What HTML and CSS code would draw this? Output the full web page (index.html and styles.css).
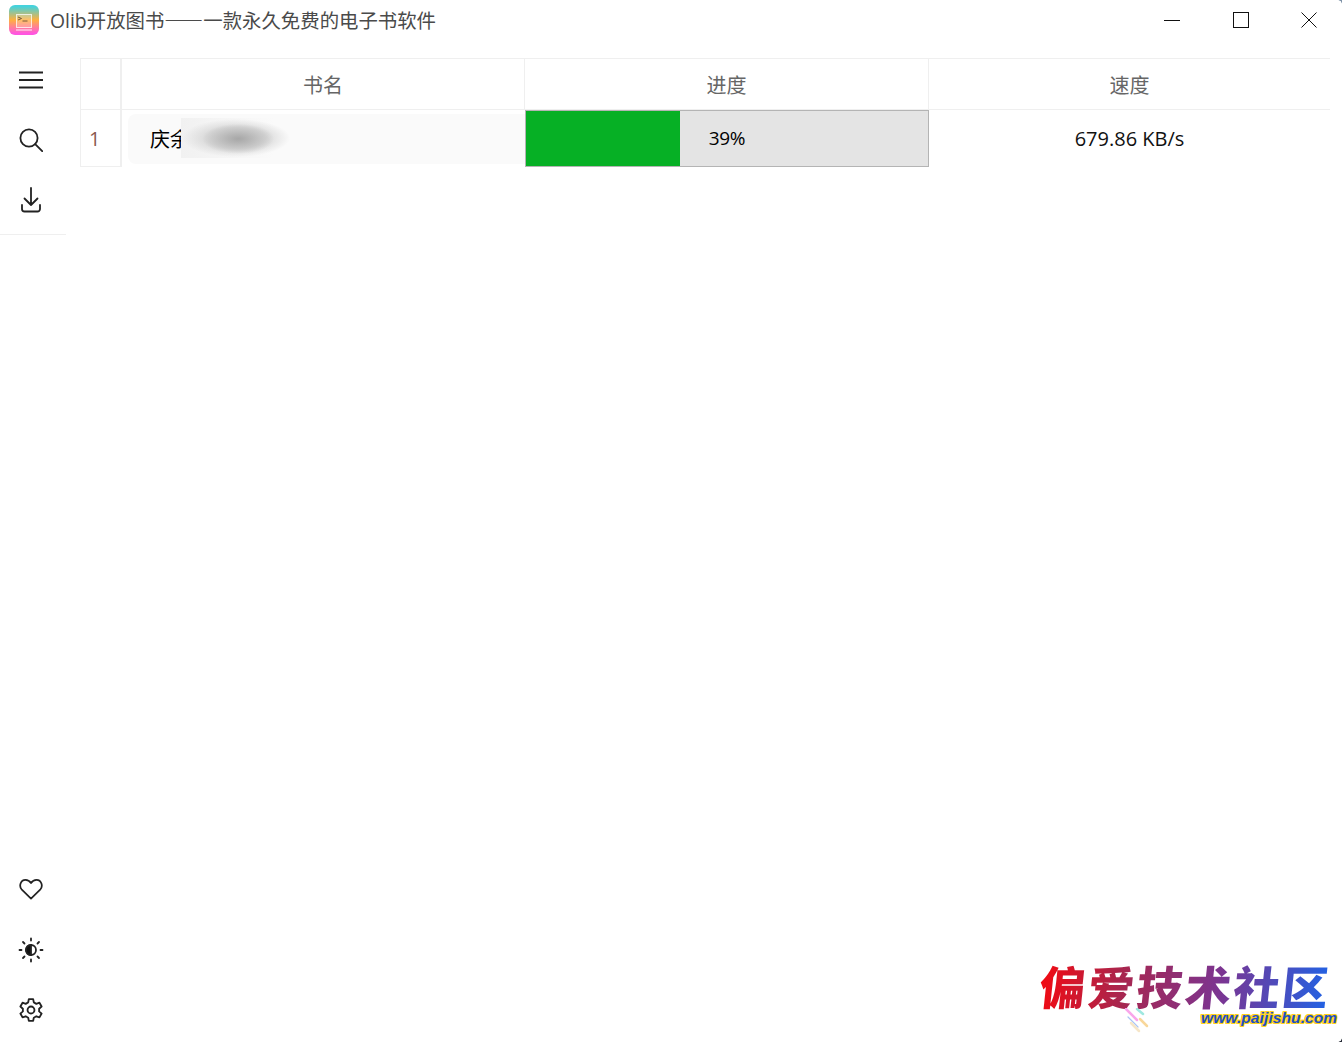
FILE: index.html
```html
<!DOCTYPE html>
<html lang="zh-CN">
<head>
<meta charset="utf-8">
<title>Olib开放图书</title>
<link rel="stylesheet" href="styles.css">
</head>
<body>
<div class="window">
  <header class="titlebar">
    <div class="title-left">
      <svg class="logo" width="30" height="30" viewBox="0 0 30 30">
        <defs>
          <linearGradient id="lg" x1="0" y1="0" x2="0" y2="1">
            <stop offset="0.05" stop-color="#45d2dc"/>
            <stop offset="0.5" stop-color="#ffb03f"/>
            <stop offset="0.95" stop-color="#ff55e0"/>
          </linearGradient>
        </defs>
        <rect width="30" height="30" rx="6" fill="url(#lg)"/>
        <rect x="7.500" y="9.500" width="15" height="13" fill="#fff" fill-opacity=".2" stroke="#fff" stroke-opacity=".75"/>
        <path d="M9 12l3.500 1.500L9 15M13.500 16h5" fill="none" stroke="#7a5a3a" stroke-width="1"/>
        <path d="M7 25h16" stroke="#fff" stroke-opacity=".6" stroke-width="1.500"/>
      </svg>
      <span class="title-text">Olib开放图书<span class="dash">——</span>一款永久免费的电子书软件</span>
    </div>
    <div class="win-controls">
      <svg width="16" height="16" viewBox="0 0 16 16"><path d="M0 8.500h16" stroke="#111" fill="none"/></svg>
      <svg class="win-max" width="16" height="16" viewBox="0 0 16 16"><rect x=".5" y=".5" width="15" height="15" stroke="#111" fill="none"/></svg>
      <svg width="16" height="16" viewBox="0 0 16 16"><path d="M.5.5l15 15M15.500.5l-15 15" stroke="#111" fill="none"/></svg>
    </div>
  </header>
  <div class="body">
    <nav class="sidebar">
      <div class="nav-top">
        <div class="nav-item">
          <svg width="24" height="24" viewBox="0 0 24 24" fill="none" stroke="#222" stroke-width="2"><path d="M0 4.500h24M0 12h24M0 19.500h24"/></svg>
        </div>
        <div class="nav-item">
          <svg width="24" height="24" viewBox="0 0 24 24" fill="none" stroke="#222" stroke-width="1.800"><circle cx="10" cy="10" r="8.600"/><path d="M16.200 16.200l7 7" stroke-linecap="round"/></svg>
        </div>
        <div class="nav-item">
          <svg width="24" height="26" viewBox="0 0 24 26" fill="none" stroke="#222" stroke-width="1.800" stroke-linecap="round" stroke-linejoin="round"><path d="M12 1v17M5.500 11.500L12 18l6.500-6.500M3 18v4a2.500 2.500 0 0 0 2.500 2.500h13A2.500 2.500 0 0 0 21 22v-4"/></svg>
        </div>
      </div>
      <div class="nav-bottom">
        <div class="nav-item">
          <svg class="heart" width="24" height="22" viewBox="0 0 26 24" fill="none" stroke="#222" stroke-width="1.900" stroke-linejoin="round"><path d="M13 22.500L3 12.800C-.5 9 1.500 2 7 2c2.800 0 4.700 1.500 6 3.500C14.300 3.500 16.200 2 19 2c5.500 0 7.500 7 4 10.800z"/></svg>
        </div>
        <div class="nav-item">
          <svg width="26" height="26" viewBox="0 0 26 26" fill="none" stroke="#222" stroke-width="1.800" stroke-linecap="round"><circle cx="13" cy="13" r="5"/><path d="M13 8a5 5 0 0 0 0 10z" fill="#111"/><path d="M13 1.500v2M13 22.500v2M1.500 13h2M22.500 13h2M5 5l1.500 1.500M19.500 19.500L21 21M21 5l-1.500 1.500M6.500 19.500L5 21"/></svg>
        </div>
        <div class="nav-item">
          <svg width="26" height="26" viewBox="0 0 24 24" fill="none" stroke="#222" stroke-width="1.700" stroke-linejoin="round"><circle cx="12" cy="12" r="3.200"/><path d="M10 2h4l.6 3 2.300 1.300 2.900-1 2 3.500-2.300 2 0 2.500 2.300 2-2 3.500-2.900-1-2.300 1.300-.6 3h-4l-.6-3-2.300-1.300-2.900 1-2-3.500 2.300-2 0-2.500-2.300-2 2-3.500 2.900 1L9.400 5z"/></svg>
        </div>
      </div>
    </nav>
    <main class="content">
      <div class="table">
        <div class="corner"></div>
        <div class="head">书名</div>
        <div class="head">进度</div>
        <div class="head last">速度</div>
        <div class="row-head">1</div>
        <div class="name-cell">
          <div class="name-pill">庆余<span class="blur"></span></div>
        </div>
        <div class="progress">
          <div class="progress-fill" style="width:154px"></div>
          <span class="progress-text">39%</span>
        </div>
        <div class="speed">679.86 KB/s</div>
      </div>
    </main>
  </div>
  <div class="watermark">
    <div class="wm-title">偏爱技术社区</div>
    <div class="wm-url">www.paijishu.com</div>
    <svg class="wm-streaks" width="30" height="26" viewBox="0 0 30 26" fill="none" stroke-linecap="round" stroke-width="2.500">
      <path d="M2 1l11 11" stroke="#f9a6ea"/>
      <path d="M13 1l6 5" stroke="#9fe8e0"/>
      <path d="M4 9l10 10" stroke="#a9c4f5" stroke-width="1.200"/>
      <path d="M16 11l7 7" stroke="#f8d79a"/>
      <path d="M7 15l8 8" stroke="#f6e6c8"/>
    </svg>
  </div>
  <div class="corner-tr"></div>
  <div class="corner-br"></div>
</div>
</body>
</html>
```
FILE: styles.css
```css
html, body {
  margin: 0;
  padding: 0;
  background: #fff;
}
.window {
  position: relative;
  width: 1342px;
  height: 1042px;
  overflow: hidden;
  display: flex;
  flex-direction: column;
  font-family: "Open Sans", "Noto Sans CJK SC", sans-serif;
  color: #111;
}
.titlebar {
  height: 50px;
  flex: none;
  display: flex;
  justify-content: space-between;
  align-items: flex-start;
}
.title-left {
  display: flex;
  align-items: center;
  gap: 11px;
  padding: 5px 0 0 9px;
}
.logo { display: block; position: relative; top: -1px; }
.title-text {
  font-size: 19.400px;
  line-height: 30px;
  color: #4a4a4a;
}
.dash {
  font-family: "Noto Sans CJK SC", sans-serif;
  letter-spacing: .2px;
  color: #222;
}
.win-controls {
  display: flex;
  gap: 52px;
  padding: 12px 25px 0 0;
}
.win-controls svg { display: block; }
.win-max { margin-left: 1px; }
.body {
  flex: 1;
  display: flex;
  min-height: 0;
}
.sidebar {
  flex: none;
  display: flex;
  flex-direction: column;
  justify-content: space-between;
  padding-right: 4px;
  box-sizing: content-box;
  width: 62px;
  padding-bottom: 2px;
}
.nav-top {
  border-bottom: 1px solid #efefef;
  margin-right: -4px;
  padding-bottom: 4px;
  padding-right: 4px;
}
.nav-item {
  height: 60px;
  display: flex;
  align-items: center;
  justify-content: center;
}
.nav-item svg { display: block; }
.heart { position: relative; top: -1px; }
.content {
  flex: 1;
  padding: 8px 12px 0 14px;
  min-width: 0;
}
.table {
  display: grid;
  grid-template-columns: 42px 403px 404px 401px;
  grid-template-rows: 51px 57px;
  border-top: 1px solid #efefef;
}
.corner,
.head {
  display: flex;
  align-items: center;
  justify-content: center;
  font-size: 20px;
  color: #666;
  background: #fff;
  border-bottom: 1px solid #efefef;
  border-right: 1px solid #efefef;
  box-sizing: border-box;
}
.corner {
  border-left: 1px solid #efefef;
  border-right: 2px solid #efefef;
}
.head.last { border-right: 0; }
.row-head {
  display: flex;
  align-items: center;
  font-size: 20px;
  color: #8a5a50;
  padding-left: 8px;
  border-left: 1px solid #efefef;
  border-right: 2px solid #efefef;
  border-bottom: 1px solid #efefef;
  box-sizing: border-box;
}
.name-cell {
  padding: 4px 0 3px 6px;
  box-sizing: border-box;
  min-width: 0;
}
.name-pill {
  position: relative;
  height: 100%;
  box-sizing: border-box;
  background: #fafafa;
  border-radius: 8px 0 0 8px;
  padding: 0 0 2px 22px;
  display: flex;
  align-items: center;
  font-size: 20px;
  color: #000;
  overflow: hidden;
}
.blur {
  position: absolute;
  left: 53px;
  top: 4px;
  width: 110px;
  height: 40px;
  background:
    radial-gradient(ellipse 36px 15px at 52% 52%, rgba(165,165,165,.95) 0, rgba(185,185,185,.6) 60%, rgba(250,250,250,0) 100%),
    radial-gradient(ellipse 54px 19px at 50% 50%, #cfcfcf 0, #dadada 55%, rgba(250,250,250,0) 100%),
    linear-gradient(90deg, #f1f1f1, #fafafa 85%);
}
.progress {
  position: relative;
  box-sizing: border-box;
  border: 1px solid #b4b4b4;
  background: #e4e4e4;
  padding-bottom: 2px;
  display: flex;
  align-items: center;
  justify-content: center;
}
.progress-fill {
  position: absolute;
  left: 0;
  top: 0;
  bottom: 0;
  background: #06b025;
}
.progress-text {
  position: relative;
  font-size: 19px;
  letter-spacing: -.3px;
  color: #000;
}
.speed {
  display: flex;
  align-items: center;
  justify-content: center;
  font-size: 20px;
  color: #111;
}
.watermark {
  position: absolute;
  left: 1040px;
  top: 955px;
  width: 300px;
  height: 85px;
}
.wm-title {
  font-family: "Noto Sans CJK SC", sans-serif;
  font-weight: 900;
  font-size: 46px;
  line-height: 60px;
  letter-spacing: 2.500px;
  white-space: nowrap;
  width: 292px;
  transform: skewX(-6deg);
  background: linear-gradient(90deg, #f20a12 0%, #a8264f 28%, #7b3592 62%, #1f63e6 100%);
  -webkit-background-clip: text;
  background-clip: text;
  color: transparent;
}
.wm-url {
  position: absolute;
  left: 161px;
  top: 54px;
  font-family: "Liberation Sans", sans-serif;
  font-weight: 700;
  font-style: italic;
  font-size: 15.500px;
  line-height: 18px;
  letter-spacing: .1px;
  color: #1d4fc4;
  text-shadow: 1px 0 0 #ffd21a, -1px 0 0 #ffd21a, 0 1px 0 #ffd21a, 0 -1px 0 #ffd21a, 1px 1px 0 #ffd21a, -1px -1px 0 #ffd21a, 1px -1px 0 #ffd21a, -1px 1px 0 #ffd21a;
  white-space: nowrap;
}
.wm-streaks {
  position: absolute;
  left: 84px;
  top: 53px;
}
.corner-tr,
.corner-br {
  position: absolute;
  right: 0;
  width: 4px;
  height: 4px;
}
.corner-tr {
  top: 0;
  background: radial-gradient(circle at 0 100%, transparent 3.500px, #7f93a8 4px);
}
.corner-br {
  bottom: 0;
  background: radial-gradient(circle at 0 0, transparent 3.500px, #2a2f3a 4px);
}
```
